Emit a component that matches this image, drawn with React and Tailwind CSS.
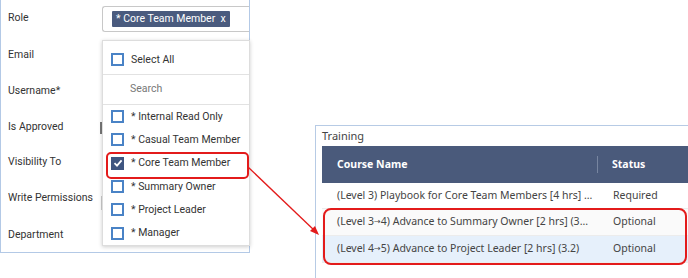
import React from "react";

const labels = [
  ["Role", "h-[36px]"],
  ["Email", "h-[37px]"],
  ["Username*", "h-[35px]"],
  ["Is Approved", "h-[37px]"],
  ["Visibility To", "h-[34px]"],
  ["Write Permissions", "h-[38px]"],
  ["Department", "h-[35px]"],
];

const roles = [
  "* Internal Read Only",
  "* Casual Team Member",
  "* Core Team Member",
  "* Summary Owner",
  "* Project Leader",
  "* Manager",
];

const Arrow = () => (
  <span className="text-[8px] align-[1px]" style={{ fontFamily: "'DejaVu Sans', sans-serif" }}>{"\u2192"}</span>
);

const courses = [
  { name: <>(Level 3) Playbook for Core Team Members [4 hrs] ...</>, status: "Required", bg: "bg-white" },
  { name: <>(Level 3<Arrow />4) Advance to Summary Owner [2 hrs] (3...</>, status: "Optional", bg: "bg-[#fafafa]" },
  { name: <>(Level 4<Arrow />5) Advance to Project Leader [2 hrs] (3.2)</>, status: "Optional", bg: "bg-[#e6f0fb]" },
];

function Box({ checked }) {
  if (checked) {
    return (
      <span className="w-[13px] h-[13px] bg-[#3f5580] flex items-center justify-center shrink-0">
        <svg width="10" height="10" viewBox="0 0 10 10">
          <path d="M1.5 5.2 L4 7.6 L8.6 2.4" stroke="white" strokeWidth="1.8" fill="none" />
        </svg>
      </span>
    );
  }
  return <span className="w-[13px] h-[13px] border-2 border-[#4a83c6] shrink-0" />;
}

export default function App() {
  return (
    <div className="relative w-[688px] h-[278px] bg-white overflow-hidden flex items-start text-[#333]" style={{ fontFamily: "Roboto, 'Liberation Sans', sans-serif" }}>
      {/* user form */}
      <div className="relative w-[250px] h-[253px] border-l border-r border-b border-[#b3c9e6] flex flex-col shrink-0">
        {labels.map(([l, h], i) => (
          <div key={l} className={`flex items-center ${h}`}>
            <span className="w-[101px] pl-[7px] text-[10.5px] text-[#333] whitespace-nowrap">{l}</span>
            {i === 0 && (
              <div className="flex-1 h-[26px] border border-r-0 border-[#c8c8c8] rounded-l-[3px] flex items-center pl-[9px] mt-[2px]">
                <span className="bg-[#4a5b7e] text-white text-[10.5px] leading-[16px] px-[4px] rounded-[1px] whitespace-nowrap">* Core Team Member&nbsp; x</span>
              </div>
            )}
          </div>
        ))}
        {/* hidden controls peeking out */}
        <span className="absolute left-[99px] top-[122px] w-[3px] h-[12px] bg-[#777]" />
        <span className="absolute left-[100px] top-[196px] w-[1px] h-[14px] bg-[#ccc]" />

        {/* dropdown menu */}
        <div className="absolute left-[101px] top-[40px] w-[148px] h-[206px] bg-white border border-[#ddd] shadow-[0_1px_4px_rgba(0,0,0,0.2)] flex flex-col">
          <div className="h-[34px] flex items-center gap-[7px] pl-[8px] pt-[4px] border-b border-[#e2e2e2]">
            <Box />
            <span className="text-[10.5px]">Select All</span>
          </div>
          <div className="h-[30px] flex items-center pl-[27px] border-b border-[#e2e2e2] text-[10.5px] text-[#777]">Search</div>
          {roles.map((r) => (
            <div key={r} className="h-[23.5px] flex items-center gap-[7px] pl-[8px]">
              <Box checked={r === "* Core Team Member"} />
              <span className="text-[10.5px] whitespace-nowrap">{r}</span>
            </div>
          ))}
          <div className="absolute left-[3px] top-[111px] w-[143px] h-[27px] border-2 border-[#e31b1b] rounded-[5px]" />
        </div>
      </div>

      {/* training panel */}
      <div className="relative ml-[65px] mt-[125px] flex-1 h-[153px] border-l border-t border-[#b7cbe5] pl-[6px]" style={{ fontFamily: "'Noto Sans', 'Open Sans', sans-serif" }}>
        <div className="h-[20px] flex items-center text-[11px] text-[#444]">Training</div>
        <div className="h-[37px] bg-[#4a5a7b] flex items-center text-white text-[10.5px] font-bold">
          <div className="w-[276px] pl-[15px] border-r border-[#7785a0] leading-[17px]">Course Name</div>
          <div className="pl-[14px]">Status</div>
        </div>
        {courses.map((c, i) => (
          <div key={i} className={`flex items-center text-[10.5px] text-[#444] border-b border-[#ececec] ${c.bg} ${i === 0 ? "h-[26px]" : "h-[27px]"}`}>
            <div className="w-[276px] pl-[15px] whitespace-nowrap">{c.name}</div>
            <div className="pl-[15px]">{c.status}</div>
          </div>
        ))}
        <div className="absolute left-[7px] top-[82px] right-[1px] h-[57px] border-2 border-[#e31b1b] rounded-[8px]" />
      </div>

      {/* callout arrow */}
      <svg className="absolute left-0 top-0 pointer-events-none" width="688" height="278">
        <line x1="248" y1="167" x2="315" y2="231" stroke="#e31b1b" strokeWidth="1.3" />
        <path d="M319 235 L310 231 L315 226 Z" fill="#e31b1b" />
      </svg>
    </div>
  );
}
